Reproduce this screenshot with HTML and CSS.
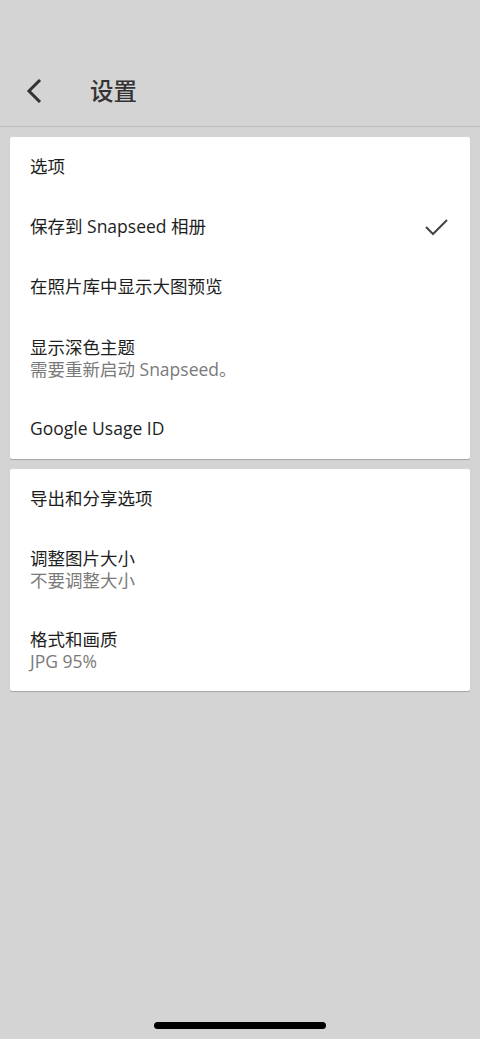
FILE: index.html
```html
<!DOCTYPE html>
<html lang="zh-CN">
<head>
<meta charset="utf-8">
<title>设置</title>
<link rel="stylesheet" href="styles.css">
</head>
<body>
<div class="screen">
  <header class="topbar">
    <svg class="back" width="24" height="24" viewBox="0 0 24 24"><path d="M16 1 L5 12 L16 23" fill="none" stroke="#333" stroke-width="3" stroke-linecap="butt" stroke-linejoin="miter"/></svg>
    <h1 class="title">设置</h1>
  </header>
  <section class="card">
    <div class="row head">选项</div>
    <div class="row check-row"><span>保存到 Snapseed 相册</span>
      <svg class="check" width="24" height="18" viewBox="0 0 24 18"><path d="M2 9 L9 16 L23 2" fill="none" stroke="#444" stroke-width="2"/></svg>
    </div>
    <div class="row">在照片库中显示大图预览</div>
    <div class="row two tall"><span class="main">显示深色主题</span><span class="sub">需要重新启动 Snapseed。</span></div>
    <div class="row">Google Usage ID</div>
  </section>
  <section class="card">
    <div class="row head">导出和分享选项</div>
    <div class="row two"><span class="main">调整图片大小</span><span class="sub">不要调整大小</span></div>
    <div class="row two"><span class="main">格式和画质</span><span class="sub">JPG 95%</span></div>
  </section>
  <div class="spacer"></div>
  <div class="home"></div>
</div>
</body>
</html>
```

FILE: styles.css
```css
* { box-sizing: border-box; margin: 0; padding: 0; }
html, body { width: 480px; height: 1039px; background: #d4d4d4; }
body { font-family: "Open Sans", "Noto Sans CJK SC", sans-serif; color: #222; overflow: hidden; }
.screen { display: flex; flex-direction: column; height: 1039px; }
.topbar {
  height: 127px;
  display: flex;
  align-items: center;
  padding: 56px 0 0 24px;
  border-bottom: 1px solid #bcbcbc;
}
.back { flex: none; }
.title {
  font-family: "Noto Sans CJK SC", sans-serif;
  font-size: 23.5px;
  font-weight: 500;
  color: #333;
  margin-left: 42px;
  line-height: 1;
}
.card {
  background: #fff;
  margin: 10px 10px 0 10px;
  border-radius: 2px;
  box-shadow: 0 1px 1px rgba(0,0,0,0.22);
  display: flex;
  flex-direction: column;
}
.row {
  height: 60px;
  padding: 0 20px 3px 20px;
  display: flex;
  align-items: center;
  font-size: 17.5px;
  color: #1e1e1e;
  font-family: "Open Sans", "Noto Sans CJK SC", sans-serif;
}
.check-row { justify-content: space-between; padding-right: 22px; }
.check { flex: none; margin-top: 2px; }
.two {
  height: 81px;
  flex-direction: column;
  align-items: flex-start;
  justify-content: center;
  padding-bottom: 1px;
}
.tall { height: 82px; }
.two .main { line-height: 22px; }
.two .sub { line-height: 22px; color: #7a7a7a; font-size: 17.5px; }
.spacer { flex: 1; }
.home {
  width: 172px;
  height: 7px;
  border-radius: 4px;
  background: #000;
  margin: 0 auto 10px auto;
}
```
